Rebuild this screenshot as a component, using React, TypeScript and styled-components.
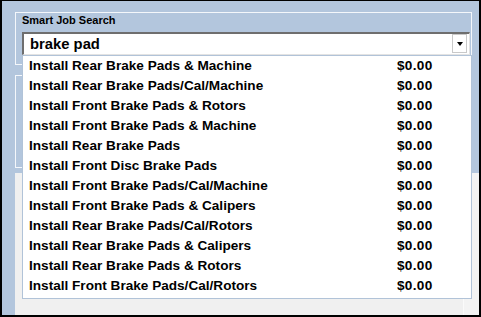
import React, { FC } from 'react';
import styled, { createGlobalStyle } from 'styled-components';

const GlobalStyle = createGlobalStyle`
  html, body {
    margin: 0;
    padding: 0;
    background: #ffffff;
  }
  * {
    box-sizing: border-box;
  }
`;

const jobs = [
  'Install Rear Brake Pads & Machine',
  'Install Rear Brake Pads/Cal/Machine',
  'Install Front Brake Pads & Rotors',
  'Install Front Brake Pads & Machine',
  'Install Rear Brake Pads',
  'Install Front Disc Brake Pads',
  'Install Front Brake Pads/Cal/Machine',
  'Install Front Brake Pads & Calipers',
  'Install Rear Brake Pads/Cal/Rotors',
  'Install Rear Brake Pads & Calipers',
  'Install Rear Brake Pads & Rotors',
  'Install Front Brake Pads/Cal/Rotors',
];

const Window = styled.div`
  width: 481px;
  height: 317px;
  display: flex;
  flex-direction: column;
  background: #b3c6dd;
  border: 2px solid #000000;
  border-top-width: 1px;
  padding: 11px 7px 0 13px;
  font-family: 'Liberation Sans', Arial, sans-serif;
  color: #000000;
  overflow: hidden;
`;

const GroupBox = styled.div<{ $height: number }>`
  height: ${(p) => p.$height}px;
  border: 1px solid #f4f7fb;
  padding: 1px 1px 0 6px;
  flex-shrink: 0;
`;

const SecondGroup = styled(GroupBox)`
  margin-top: 10px;
`;

const GroupLabel = styled.div`
  font-size: 11px;
  font-weight: bold;
  line-height: 13px;
  height: 13px;
`;

const ComboWrap = styled.div`
  position: relative;
  margin-top: 5px;
  width: 448px;
  z-index: 2;
`;

const ComboField = styled.div`
  height: 23px;
  display: flex;
  align-items: stretch;
  background: #ffffff;
  border-top: 2px solid #6e6e6e;
  border-left: 2px solid #6e6e6e;
  border-bottom: 1px solid #e3e3e3;
  border-right: 1px solid #e3e3e3;
`;

const ComboText = styled.div`
  flex: 1;
  padding-left: 6px;
  font-size: 14.8px;
  font-weight: bold;
  line-height: 20px;
`;

const DropButton = styled.div`
  width: 15px;
  margin: 0 2px 1px 0;
  display: flex;
  align-items: center;
  justify-content: center;
  border: 1px solid #c9c9c9;
  background: #ffffff;
`;

const Arrow = styled.div`
  width: 0;
  height: 0;
  border-left: 3.5px solid transparent;
  border-right: 3.5px solid transparent;
  border-top: 4px solid #000000;
  margin-top: 1px;
`;

const DropList = styled.div`
  position: absolute;
  top: 100%;
  left: 0;
  width: 450px;
  background: #ffffff;
  border: 1px solid #b1c3d8;
  padding-bottom: 2px;
`;

const JobRow = styled.div`
  display: grid;
  grid-template-columns: 368px auto;
  height: 20px;
  padding-left: 6px;
  font-size: 13.6px;
  font-weight: bold;
  line-height: 20px;
  white-space: nowrap;
`;

const Price = styled.span`
  letter-spacing: 0.3px;
`;

const BottomPanel = styled.div`
  flex: 1;
  margin: 5px -7px 0 0;
  display: flex;
  background: #f0f0f0;
`;

const PanelBody = styled.div`
  flex: 1;
`;

const PanelSide = styled.div`
  width: 16px;
  border-left: 1px solid #fafafa;
  background: #f3f3f3;
`;

const App: FC = () => (
  <>
    <GlobalStyle />
    <Window>
      <GroupBox $height={53}>
        <GroupLabel>Smart Job Search</GroupLabel>
        <ComboWrap>
          <ComboField>
            <ComboText>brake pad</ComboText>
            <DropButton>
              <Arrow />
            </DropButton>
          </ComboField>
          <DropList>
            {jobs.map((job, i) => (
              <JobRow key={i}>
                <span>{job}</span>
                <Price>$0.00</Price>
              </JobRow>
            ))}
          </DropList>
        </ComboWrap>
      </GroupBox>
      <SecondGroup $height={93} />
      <BottomPanel>
        <PanelBody />
        <PanelSide />
      </BottomPanel>
    </Window>
  </>
);

export default App;
